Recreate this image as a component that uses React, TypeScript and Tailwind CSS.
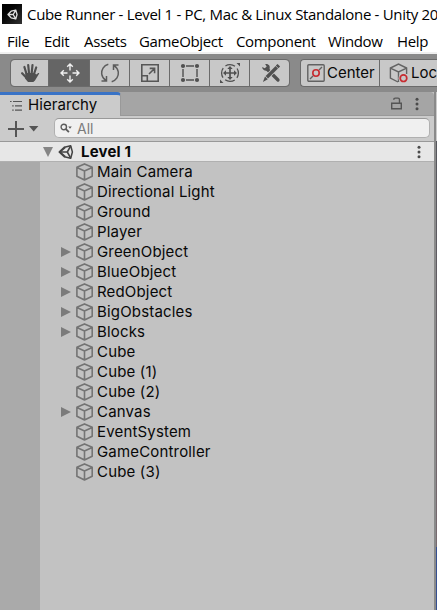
import React from 'react';

const rows: [string, boolean][] = [
  ['Main Camera', false], ['Directional Light', false], ['Ground', false], ['Player', false],
  ['GreenObject', true], ['BlueObject', true], ['RedObject', true], ['BigObstacles', true],
  ['Blocks', true], ['Cube', false], ['Cube (1)', false], ['Cube (2)', false], ['Canvas', true],
  ['EventSystem', false], ['GameController', false], ['Cube (3)', false],
];

function Cube() {
  return (
    <svg width="18" height="18" viewBox="0 0 18 18" fill="none" stroke="#747474" strokeWidth="1.6" strokeLinejoin="round">
      <path d="M8.5.9 16.2 4.3V13.3L8.5 17 .9 13.3V4.3ZM.9 4.6 8.5 8l7.7-3.4M8.5 8v9" />
    </svg>
  );
}

function Kebab() {
  return (
    <svg width="4" height="14" viewBox="0 0 4 14" fill="#4b4b4b">
      <circle cx="2" cy="2.2" r="1.5" /><circle cx="2" cy="7" r="1.5" /><circle cx="2" cy="11.8" r="1.5" />
    </svg>
  );
}

function UnityMark() {
  return (
    <svg width="16" height="16" viewBox="0 0 16 16" fill="none" stroke="#444" strokeLinejoin="round">
      <path d="M6.4 3.3 12.7 1.7 14.4 8 12.7 14.3 6.4 12.7" strokeWidth="1.5" />
      <path d="M7 3.1 1.6 8 7 12.9" strokeWidth="2.2" />
      <path d="M1.6 8H9.3L12.7 1.9M9.3 8l3.4 6.1" strokeWidth="1.6" />
    </svg>
  );
}

function Hand() {
  return (
    <svg width="20" height="20" viewBox="0 0 20 20" fill="none" stroke="#505050" strokeWidth="2.2" strokeLinecap="round">
      <path d="M6.5 11 4.4 4M9 10 8.2 2M11.7 10 12.5 2M14 11l2.2-6.5M5.7 14 2.1 10.2" />
      <path d="M5.5 10h9.2l1.5 1.4 1.8-1.2c1-.5 1.5.1.9.9L15 17.4 13.3 19H8L5 15.5Z" fill="#505050" stroke="none" />
    </svg>
  );
}

function Move() {
  return (
    <svg width="20" height="20" viewBox="0 0 20 20" fill="none" stroke="#efefef" strokeWidth="1.4">
      <path d="M10 1v6.5M10 12.5V19M1 10h6.5M12.5 10H19M7.2 3.8 10 1l2.8 2.8M7.2 16.2 10 19l2.8-2.8M3.8 7.2 1 10l2.8 2.8M16.2 7.2 19 10l-2.8 2.8" />
    </svg>
  );
}

function Rotate() {
  return (
    <svg width="20" height="20" viewBox="0 0 20 20" fill="none" stroke="#5c5c5c" strokeWidth="1.5">
      <path d="M8.3 1.3C3.6 2.6 1.2 6.8 1.7 11c.4 3 2 5 4.4 6.7M1.5 18h5v-5M11.7 18.7c4.7-1.3 7.1-5.5 6.6-9.7-.4-3-2-5-4.4-6.7M18.5 2h-5v5" />
    </svg>
  );
}

function Scale() {
  return (
    <svg width="20" height="20" viewBox="0 0 20 20" fill="none" stroke="#565656" strokeWidth="1.6">
      <path d="M1.8 12.5V1.8h16.4v16.4H7.5M1.8 12.7H7.3v5.5H1.8ZM9 11l5.3-5.3M9.7 5.4h4.9v4.9" />
    </svg>
  );
}

function RectTool() {
  return (
    <svg width="20" height="20" viewBox="0 0 20 20" fill="none" stroke="#505050" strokeWidth="1.4">
      <path d="M6 3h8M6 17h8M3 6v8M17 6v8" />
      <g fill="#505050" stroke="none"><circle cx="3" cy="3" r="2.1" /><circle cx="17" cy="3" r="2.1" /><circle cx="3" cy="17" r="2.1" /><circle cx="17" cy="17" r="2.1" /></g>
    </svg>
  );
}

function TransformTool() {
  return (
    <svg width="22" height="22" viewBox="0 0 22 22" fill="none" stroke="#505050" strokeWidth="1.3">
      <circle cx="11" cy="11" r="8.4" strokeDasharray="10.2 3" strokeDashoffset="5.1" />
      <path d="M11 5v12M5 11h12" strokeWidth="1.7" />
      <path d="m8.3 7 2.7-3 2.7 3ZM8.3 15l2.7 3 2.7-3ZM7 8.3 4 11l3 2.7ZM15 8.3l3 2.7-3 2.7ZM17.5 1H21v3.5ZM1 17.5V21h3.5Z" fill="#505050" stroke="none" />
    </svg>
  );
}

function Tools() {
  return (
    <svg width="20" height="20" viewBox="0 0 20 20" fill="none" stroke="#505050">
      <path d="M6.5 6.5 17 17" strokeWidth="3.3" strokeLinecap="round" />
      <path d="M4.2 1.2C7.7.6 9.6 3.3 8.4 6.3 6 9 1.6 8 1.1 4L3.8 5.3 5.7 3.5Z" fill="#505050" stroke="none" />
      <path d="M5.2 14.8 15.5 4.5" stroke="#c8c8c8" strokeWidth="5" />
      <path d="M5.8 14.2 15.8 4.2" strokeWidth="3.4" /><path d="m16.6 1 2.5 2.5-1.7 1.7-2.6-2.6ZM4 13.5l2.8 2.8-4.9 2.6Z" fill="#505050" stroke="none" />
    </svg>
  );
}

const tools = [
  { icon: <Hand />, cls: 'w-[38px] rounded-l bg-[#c8c8c8]' },
  { icon: <Move />, cls: 'w-[41px] pl-px bg-[#656565]' },
  { icon: <Rotate />, cls: 'w-10 bg-[#c8c8c8]' },
  { icon: <Scale />, cls: 'w-10 bg-[#c8c8c8]' },
  { icon: <RectTool />, cls: 'w-10 bg-[#c8c8c8]' },
  { icon: <TransformTool />, cls: 'w-10 bg-[#c8c8c8]' },
  { icon: <Tools />, cls: 'w-[39px] pl-0.5 rounded-r border-r-0 bg-[#c8c8c8]' },
];

export default function App() {
  return (
    <div className="flex h-[610px] w-[437px] flex-col overflow-hidden whitespace-nowrap bg-white font-['Inter',sans-serif] text-[15px] text-[#080808]">
      <header className="flex h-[54px] shrink-0 flex-col border-b-2 border-[#f0f0f0] font-['Open_Sans',sans-serif] text-black">
        <div className="flex h-7 items-center pl-[2px]">
          <span className="flex h-5 w-5 shrink-0 items-center justify-center bg-gradient-to-br from-black to-[#333]">
            <svg width="11" height="11" viewBox="0 0 16 16" fill="none" stroke="#ddd" strokeWidth="1.9" strokeLinejoin="round"><path d="M6 3.2 12.7 1.5 14.6 8 12.7 14.5 6 12.8 1.4 8ZM1.5 8H9l3.7-6.3M9 8l3.7 6.3" /></svg>
          </span>
          <span className="ml-[5px] text-[15px] tracking-[-0.32px]">Cube Runner - Level 1 - PC, Mac &amp; Linux Standalone - Unity 20</span>
        </div>
        <nav className="flex h-6 items-center pt-[2px] text-[15px] tracking-[-0.35px]">
          <span className="ml-[7px] w-[37px]">File</span><span className="w-10">Edit</span><span className="w-[55px]">Assets</span><span className="w-[97px]">GameObject</span><span className="w-[92px]">Component</span><span className="w-[69px]">Window</span><span>Help</span>
        </nav>
      </header>

      <div className="flex h-[38px] shrink-0 items-start bg-[#8a8a8a] pt-[5px]">
        <div className="ml-[10px] flex h-7 w-[280px] shrink-0 overflow-hidden rounded border border-[#6b6b6b]">
          {tools.map((t, i) => <div key={i} className={`flex shrink-0 items-center justify-center border-r border-[#6b6b6b] ${t.cls}`}>{t.icon}</div>)}
        </div>
        <div className="ml-[10px] flex h-7 flex-1 rounded-l border border-r-0 border-[#6b6b6b] bg-[#c8c8c8]">
          <div className="flex w-[79px] shrink-0 items-center border-r border-[#6b6b6b] pl-[6px]">
            <svg width="18" height="18" viewBox="0 0 18 18" fill="none" stroke="#626262" strokeWidth="1.4"><rect x=".8" y=".8" width="16.4" height="16.4" rx="1" /><path d="m3 15 3-3m6-6 3-3" /><circle cx="9" cy="9" r="3.2" stroke="#c72b30" strokeWidth="1.6" /></svg>
            <span className="ml-[2px]">Center</span>
          </div>
          <div className="flex items-center pl-[9px]">
            <svg className="shrink-0" width="20" height="20" viewBox="0 0 20 20" fill="none" stroke="#626262" strokeWidth="1.4"><path d="M9 19 1.4 15V5L9.5 1l8.1 4v6M1.4 5.2 9.5 9l8.1-3.8M9.5 9v10" /><circle cx="14.5" cy="15.2" r="5" fill="#c8c8c8" stroke="none" /><circle cx="14.5" cy="15.2" r="3.3" stroke="#c72b30" strokeWidth="1.7" /></svg>
            <span className="ml-[2px]">Loc</span>
          </div>
        </div>
      </div>

      <main className="flex min-h-0 flex-1 bg-[#8a8a8a]">
        <section className="flex w-[434px] shrink-0 flex-col bg-[#c2c2c2]">
          <div className="flex h-6 shrink-0 rounded-tr bg-[#a5a5a5]">
            <div className="flex w-[121px] items-center rounded-tr border-r border-t-[3px] border-r-[#999] border-t-[#3973c6] bg-[#cbcbcb] pl-[10px]">
              <svg width="13" height="12" viewBox="0 0 13 12" fill="none" stroke="#555" strokeWidth="1.2"><path d="M3 1.5h9M5 5.8h7M5 10.2h7M0 1.5h1.6M2.2 5.8h1.5M2.2 10.2h1.5" /></svg>
              <span className="ml-[5px] text-[15px] tracking-[0.08px]">Hierarchy</span>
            </div>
            <div className="flex flex-1 items-center justify-end border-b border-[#999] pr-[15px]">
              <svg className="mr-[13px]" width="11" height="13" viewBox="0 0 11 13" fill="none" stroke="#555" strokeWidth="1.4"><path d="M.7 6.2h9.6v5.6H.7ZM8.5 6V2.8Q8.5 1.1 7 1.1H4.3Q2.8 1.1 2.8 2.8" /></svg>
              <Kebab />
            </div>
          </div>
          <div className="flex h-[26px] shrink-0 items-center border-b border-[#999] bg-[#cbcbcb] pl-2">
            <svg width="31" height="16" viewBox="0 0 31 16" fill="#555"><path d="M7 0h2v7h7v2H9v7H7V9H0V7h7ZM21 5h9.4L25.700 10.500Z" /></svg>
            <div className="mb-px ml-[15px] flex h-5 w-[376px] items-center rounded-[5px] border border-[#b0b0b0] border-t-[#999] bg-[#f0f0f0] pl-[5px] text-[#7b7b7b]">
              <svg className="mt-[2px]" width="13" height="12" viewBox="0 0 13 12" fill="none" stroke="#5b5b5b" strokeWidth="1.4"><circle cx="3.8" cy="4" r="2.7" /><path d="m5.9 6.1 3 3" strokeWidth="1.8" /><path d="M8.2 3.5h3.6l-1.8 2.2Z" fill="#5b5b5b" stroke="none" /></svg>
              <span className="ml-1 text-[14px]">All</span>
            </div>
          </div>
          <div className="flex h-5 shrink-0 items-center border-b border-[#b0b0b0] bg-[#e7e7e7] pl-[43px] pr-[13px] pt-px">
            <svg width="10" height="10" viewBox="0 0 10 10" fill="#858585"><path d="M0 0h10L5 10Z" /></svg>
            <span className="ml-[5px]"><UnityMark /></span>
            <span className="ml-[7px] flex-1 text-[15px] font-bold tracking-[0.2px]">Level 1</span><Kebab />
          </div>
          <div className="flex min-h-0 flex-1">
            <div className="w-10 shrink-0 bg-[#aaaaaa]" />
            <ul className="flex-1">
              {rows.map(([name, parent]) => (
                <li key={name} className="flex h-5 items-center pl-[21px]">
                  <span className="w-[15px] shrink-0">{parent && <svg width="10" height="10" viewBox="0 0 10 10" fill="#7b7b7b"><path d="M0 0 10 5 0 10Z" /></svg>}</span>
                  <Cube /><span className="ml-[3px] text-[15px] tracking-[0.17px]">{name}</span>
                </li>
              ))}
            </ul>
          </div>
        </section>
        <div className="ml-[2px] flex w-px flex-col">
          <div className="h-[49px] bg-[#cbcbcb]" /><div className="h-[406px] bg-gradient-to-b from-[#55565c] to-[#786b70]" /><div className="flex-1 bg-[#344f91]" />
        </div>
      </main>
    </div>
  );
}
